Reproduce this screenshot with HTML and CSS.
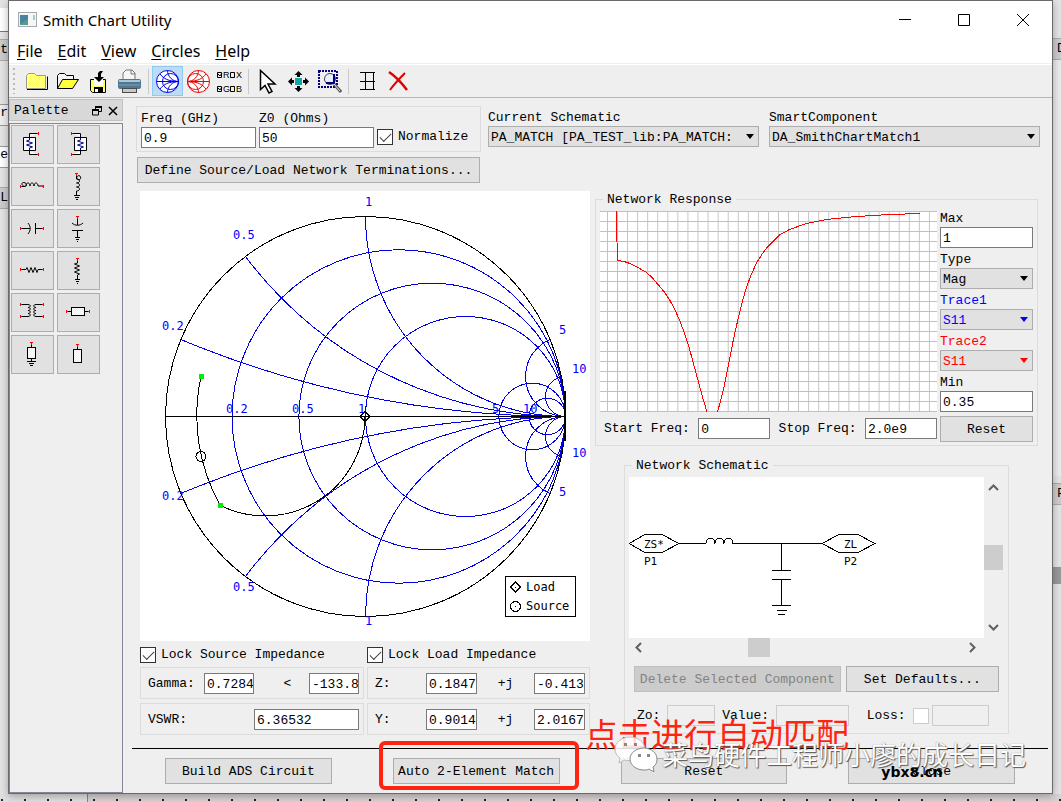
FILE: index.html
```html
<!DOCTYPE html>
<html lang="en">
<head>
<meta charset="utf-8">
<title>Smith Chart Utility</title>
<link rel="stylesheet" href="styles.css">
</head>
<body>
<div class="desktop">
  <div class="edge edge-left" aria-hidden="true">
    <span class="edge-doc"></span><span class="edge-tab">rt</span><span class="edge-gap"></span><span class="edge-field">r</span><span class="edge-field edge-white">ee</span><span class="edge-tab">L</span>
  </div>
  <div class="window">
    <header class="titlebar">
      <svg class="app-icon" width="19" height="15" viewBox="0 0 19 15"><rect x=".5" y=".5" width="18" height="14" fill="#f4f6f8" stroke="#a5aaae"/><rect x="2" y="3" width="8" height="10" fill="#5a9a86"/><path d="M2 3h8v4l-8 5z" fill="#4a82a0"/><path d="M16 3v5" stroke="#5aa08a"/></svg>
      <h1 class="title">Smith Chart Utility</h1>
      <div class="window-buttons">
        <button class="wbtn" aria-label="Minimize"><svg width="14" height="14"><path d="M1 6.500h12" stroke="#000"/></svg></button>
        <button class="wbtn" aria-label="Maximize"><svg width="14" height="14"><path d="M1.500 1.500h11v11h-11z" fill="none" stroke="#000"/></svg></button>
        <button class="wbtn" aria-label="Close window"><svg width="14" height="14"><path d="M1 1l12 12M13 1L1 13" stroke="#000"/></svg></button>
      </div>
    </header>
    <nav class="menubar">
      <button class="menu"><u>F</u>ile</button><button class="menu"><u>E</u>dit</button><button class="menu"><u>V</u>iew</button><button class="menu"><u>C</u>ircles</button><button class="menu"><u>H</u>elp</button>
    </nav>
    <div class="toolbar">
      <span class="grip"></span>
      <button class="tool" aria-label="New"><svg width="25" height="25"><defs><pattern id="dither" width="2" height="2" patternUnits="userSpaceOnUse"><rect width="2" height="2" fill="#ffff66"/><path d="M0 0h1v1h-1zM1 1h1v1h-1z" fill="#fff"/></pattern></defs><path d="M2.500 19.500v-13l2-2h6l2 2h9v13z" fill="url(#dither)" stroke="#999"/><path d="M3 20.500h20.500V7.500" fill="none" stroke="#000"/></svg></button>
      <button class="tool" aria-label="Open"><svg width="25" height="25"><path d="M2.500 19.500v-13l2-2h5l2 2h7v4h4.500l-6 9z" fill="url(#dither)" stroke="#000"/><path d="M2.500 19.500l5-9h16l-6 9z" fill="#ffff3c" stroke="#000"/></svg></button>
      <button class="tool" aria-label="Save"><svg width="25" height="25"><path d="M4.500 10.500h15v13h-13l-2-2z" fill="#ffff66" stroke="#000"/><path d="M8 10h9v7H8z" fill="#fff"/><path d="M8 18h9v6H8z" fill="#000"/><path d="M9 20h3v3H9z" fill="#fff"/><path d="M17 2h-3l-2 2v4H8l5 5 5-5h-3V5z" fill="#000"/></svg></button>
      <button class="tool" aria-label="Print"><svg width="25" height="25"><path d="M6 11V4l3-3h6l3 3v7z" fill="#f6f6f6" stroke="#777"/><path d="M14 1v4h4" fill="none" stroke="#777"/><rect x="1" y="10" width="23" height="10" rx="2" fill="#527791"/><path d="M2 12h21" stroke="#a9c8da" stroke-width="2"/><path d="M2 16h21" stroke="#7ba3bb"/><path d="M5 19h15v5H5z" fill="#4c4c4c"/><path d="M6 20h13v3H6z" fill="#c8c8c8"/></svg></button>
      <span class="separator"></span>
      <button class="tool tool-on" aria-label="Impedance circles"><svg width="25" height="25"><g fill="none" stroke="#0000f0"><circle cx="12.500" cy="12.500" r="11" fill="#fff"/><path d="M1.500 12.500h22M12.500 1.500c0 6 5 11 11 11M12.500 23.500c0-6 5-11 11-11M5 5c4 5 8 7 18 7.500M5 20c4-5 8-7 18-7.500"/><circle cx="15.500" cy="12.500" r="8"/></g></svg></button>
      <button class="tool" aria-label="Admittance circles"><svg width="25" height="25"><g fill="none" stroke="#f00000"><circle cx="12.500" cy="12.500" r="11" fill="#fff"/><path d="M1.500 12.500h22M12.500 1.500c0 6-5 11-11 11M12.500 23.500c0-6-5-11-11-11M20 5c-4 5-8 7-18 7.500M20 20c-4-5-8-7-18-7.500"/><circle cx="9.500" cy="12.500" r="8"/></g></svg></button>
      <button class="tool" aria-label="Circle options"><svg class="tiny" width="27" height="25"><g fill="none" stroke="#000"><path d="M1.500 3.500h4v5h-4zM2 5l2 2 2-3M14.500 3.500h4v5h-4zM1.500 17.500h4v5h-4zM2 19l2 2 2-3M14.500 17.500h4v5h-4z"/></g><text x="7" y="9">R</text><text x="20" y="9">X</text><text x="7" y="23">G</text><text x="20" y="23">B</text></svg></button>
      <span class="separator"></span>
      <button class="tool" aria-label="Select"><svg width="25" height="25"><path d="M5.500 1.500v19l4.500-4 4 7.500 3-1.500-4-7.500h7z" fill="#fff" stroke="#000" stroke-width="1.500"/></svg></button>
      <button class="tool" aria-label="Pan"><svg width="25" height="25"><path d="M9 9h7v7H9z" fill="#14a8a8"/><path d="M12.500 2l4 4h-2.500v2h-3V6H8.500zM12.500 23l4-4h-2.500v-2h-3v2H8.500zM2 12.500l4-4V11h2v3H6v2.500zM23 12.500l-4-4V11h-2v3h2v2.500z" fill="#000"/></svg></button>
      <button class="tool" aria-label="Zoom area"><svg width="25" height="25"><path d="M2 2h18v16H2z" fill="none" stroke="#000080" stroke-width="2" stroke-dasharray="2 1"/><circle cx="13" cy="10" r="5.500" fill="#e8f0ff" stroke="#445"/><path d="M17 5v9H9" fill="none" stroke="#000080" stroke-width="2"/><path d="M17 15l7 8" stroke="#555" stroke-width="3"/><path d="M17 15l6 7" stroke="#eee"/></svg></button>
      <span class="separator"></span>
      <button class="tool" aria-label="Grid"><svg width="25" height="25"><path d="M5 3.500h15M5 12.500h15M5 20.500h15M10.500 3v18M18.500 3v18" stroke="#000"/></svg></button>
      <button class="tool" aria-label="Delete"><svg width="25" height="25"><path d="M3 3c6 4 12 10 18 18" fill="none" stroke="#e00000" stroke-width="2.500"/><path d="M19 4C14 9 9 14 4 21" fill="none" stroke="#e00000" stroke-width="2"/></svg></button>
    </div>

    <div class="workspace">
      <aside class="dock">
        <div class="dock-head"><h2 class="dock-title">Palette</h2>
          <button class="dock-btn" aria-label="Float"><svg width="10" height="10"><path d="M3.500 3V.5h6v5H7M.5 4h6v5h-6z" fill="none" stroke="#000"/><path d="M3 1h7M0 4h7" stroke="#000" stroke-width="2"/></svg></button>
          <button class="dock-btn" aria-label="Close palette"><svg width="10" height="10"><path d="M1 1l8 8M9 1L1 9" stroke="#000" stroke-width="1.500"/></svg></button>
        </div>
        <div class="palette">
          <button class="part" aria-label="Load termination"><svg viewBox="1 1 41 37"><path class="w" d="M12.500 12.500h12v13h-12zM18.500 12V8.500H27M18.500 26v3.500H27"/><path class="b" d="M18.500 13v2l-3 1 6 2-6 2 6 2-3 1v2"/><path class="r" d="M27.500 7v3M27.500 28v3M26 8.500h2M26 29.500h2"/></svg></button>
          <button class="part" aria-label="Source termination"><svg viewBox="1 1 41 37"><path class="w" d="M17.500 12.500h12v13h-12zM23.500 12V8.500H15M23.500 26v3.500H15"/><path class="b" d="M23.500 13v2l-3 1 6 2-6 2 6 2-3 1v2"/><path class="r" d="M14.500 7v3M14.500 28v3M14 8.500h2M14 29.500h2"/></svg></button>
          <button class="part" aria-label="Series inductor"><svg viewBox="1 1 41 37"><path class="k" d="M10 19.500h4c-4-1-4-4-1-4s3 4 1 4M15 19c0-4 4-4 4 0 0-4 4-4 4 0 0-4 4-4 4 0h6"/><path class="r" d="M9.500 18v3M32.500 18v3M9 19.500h2M31 19.500h2"/></svg></button>
          <button class="part" aria-label="Shunt inductor"><svg viewBox="1 1 41 37"><path class="k" d="M19.500 7v4c1 3 5 2 4-1s-4-1-4 2c4 0 4 4 0 4 4 0 4 4 0 4 4 0 4 4 0 4v4M17 28.500h6M18 30.500h4M19 32.500h2"/><path class="r" d="M18 6.500h3M19.500 6v3"/></svg></button>
          <button class="part" aria-label="Series capacitor"><svg viewBox="1 1 41 37"><path class="k" d="M10 19.500h9M17 14c3 4 3 7 0 11M24.500 14v11M24.500 19.500h8"/><path class="r" d="M9.500 18v3M32.500 18v3M9 19.500h2M31 19.500h2"/></svg></button>
          <button class="part" aria-label="Shunt capacitor"><svg viewBox="1 1 41 37"><path class="k" d="M20.500 7v9M15 14c3 3 8 3 11 0M15 21.500h11M20.500 22v6M18 28.500h5M19 30.500h3M20 32.500h1"/><path class="r" d="M19 7.500h3M20.500 7v3"/></svg></button>
          <button class="part" aria-label="Series resistor"><svg viewBox="1 1 41 37"><path class="k" d="M10 18.500h5l1-2 2 5 2-5 2 5 2-5 2 5 1-3h5"/><path class="r" d="M9.500 17v3M32.500 17v3M9 18.500h2M31 18.500h2"/></svg></button>
          <button class="part" aria-label="Shunt resistor"><svg viewBox="1 1 41 37"><path class="k" d="M20.500 7v5l-3 1 5 2-5 2 5 2-5 2 5 2-2 1v4M18 28.500h5M19 30.500h3M20 32.500h1"/><path class="r" d="M19 7.500h3M20.500 7v3"/></svg></button>
          <button class="part" aria-label="Transformer"><svg viewBox="1 1 41 37"><path class="k" d="M10 11.500h7c3 0 3 3 0 3 3 0 3 3 0 3 3 0 3 3 0 3 3 0 3 3 0 3h-7M32 11.500h-7c-3 0-3 3 0 3-3 0-3 3 0 3-3 0-3 3 0 3-3 0-3 3 0 3h7"/><path class="r" d="M9.500 10v3M9.500 22v3M32.500 10v3M32.500 22v3M9 11.500h2M9 23.500h2M31 11.500h2M31 23.500h2"/></svg></button>
          <button class="part" aria-label="Series line"><svg viewBox="1 1 41 37"><path class="k" d="M10 18.500h22"/><rect x="14.500" y="14.500" width="13" height="8" fill="url(#dither)" stroke="#000"/><path class="r" d="M9.500 17v3M32.500 17v3M9 18.500h2M31 18.500h2"/></svg></button>
          <button class="part" aria-label="Shorted stub"><svg viewBox="1 1 41 37"><path class="k" d="M20.500 8v19M16 26.500h9M18 28.500h5M19 30.500h3"/><rect x="16.500" y="12.500" width="8" height="11" fill="url(#dither)" stroke="#000"/><path class="r" d="M19 7.500h3M20.500 7v3"/></svg></button>
          <button class="part" aria-label="Open stub"><svg viewBox="1 1 41 37"><path class="k" d="M20.500 10v6"/><rect x="16.500" y="14.500" width="8" height="13" fill="url(#dither)" stroke="#000"/><path class="r" d="M19 9.500h3M20.500 9v3"/></svg></button>
        </div>
      </aside>

      <main class="main">
        <section class="top">
          <div class="settings">
            <div class="box freq">
              <label class="field">Freq (GHz)<input class="input" value="0.9"></label>
              <label class="field">Z0 (Ohms)<input class="input" value="50"></label>
              <label class="check"><input type="checkbox" checked>Normalize</label>
            </div>
            <button class="btn define">Define Source/Load Network Terminations...</button>
          </div>
          <label class="field pick">Current Schematic<span class="combo"><select class="select"><option>PA_MATCH [PA_TEST_lib:PA_MATCH:</option></select></span></label>
          <label class="field pick">SmartComponent<span class="combo"><select class="select"><option>DA_SmithChartMatch1</option></select></span></label>
        </section>

        <section class="body">
          <div class="left">
            <svg class="smith" viewBox="0 0 450 450" role="img" aria-label="Smith chart">
              <defs><clipPath id="disc"><circle cx="225.500" cy="225.500" r="200"/></clipPath></defs>
              <g class="grid-blue" clip-path="url(#disc)">
                <circle cx="258.800" cy="225.500" r="166.700"/><circle cx="292.200" cy="225.500" r="133.300"/><circle cx="325.500" cy="225.500" r="100"/><circle cx="392.200" cy="225.500" r="33.300"/><circle cx="407.300" cy="225.500" r="18.200"/>
                <circle cx="425.500" cy="-774.500" r="1000"/><circle cx="425.500" cy="1225.500" r="1000"/>
                <circle cx="425.500" cy="-174.500" r="400"/><circle cx="425.500" cy="625.500" r="400"/>
                <circle cx="425.500" cy="25.500" r="200"/><circle cx="425.500" cy="425.500" r="200"/>
                <circle cx="425.500" cy="185.500" r="40"/><circle cx="425.500" cy="265.500" r="40"/>
                <circle cx="425.500" cy="205.500" r="20"/><circle cx="425.500" cy="245.500" r="20"/>
              </g>
              <g class="ink">
                <circle cx="225.500" cy="225.500" r="200"/><path d="M25 225.500h401M370 225.500h50"/><path d="M424.500 200v50" stroke-width="2"/>
                <path d="M61 185.500A184 184 0 0 0 80 314M80.500 314.500A100 100 0 0 0 225 225.500"/>
                <circle cx="61" cy="265.500" r="5"/><path d="M225 220.500l5 5-5 5-5-5z"/>
                <path d="M365.500 385.500h70v40h-70zM375.500 391l5 5-5 5-5-5z"/><circle cx="375.500" cy="415.500" r="5"/>
                <path d="M375 396h1M375 415.500h1"/>
              </g>
              <path fill="#00ee00" d="M59 183h5v5h-5zM78 312h5v5h-5z"/>
              <g class="plot-text blue">
                <text x="225" y="15">1</text><text x="93" y="48">0.5</text><text x="22" y="139">0.2</text><text x="86" y="222">0.2</text><text x="152" y="222">0.5</text><text x="218" y="222">1</text><text x="352" y="222">5</text><text x="383" y="222">10</text><text x="419" y="143">5</text><text x="432" y="182">10</text><text x="432" y="266">10</text><text x="419" y="305">5</text><text x="93" y="400">0.5</text><text x="22" y="309">0.2</text><text x="225" y="434">1</text>
              </g>
              <g class="plot-text"><text x="386" y="400">Load</text><text x="386" y="419">Source</text></g>
            </svg>
            <div class="locks">
              <label class="check"><input type="checkbox" checked>Lock Source Impedance</label>
              <label class="check"><input type="checkbox" checked>Lock Load Impedance</label>
              <div class="box readout"><label for="gamma">Gamma:</label><input id="gamma" class="input" value="0.7284"><span class="op">&lt;</span><input aria-label="Gamma angle" class="input" value="-133.8"></div>
              <div class="box readout complex"><label for="z">Z:</label><input id="z" class="input" value="0.1847"><span class="op">+j</span><input aria-label="Z imaginary" class="input" value="-0.413"></div>
              <div class="box readout"><label for="vswr">VSWR:</label><input id="vswr" class="input wide" value="6.36532"></div>
              <div class="box readout complex"><label for="y">Y:</label><input id="y" class="input" value="0.9014"><span class="op">+j</span><input aria-label="Y imaginary" class="input" value="2.0167"></div>
            </div>
          </div>

          <div class="right">
            <fieldset class="group response">
              <legend>Network Response</legend>
              <div class="plot-side">
                <svg class="plot" viewBox="0 0 337 201" preserveAspectRatio="none" role="img" aria-label="Network response plot">
                  <defs><pattern id="cells" x="7" y="0" width="10.060" height="10" patternUnits="userSpaceOnUse"><path d="M0 .5h10.060M.5 0v10" stroke="#c0c0c0" shape-rendering="crispEdges"/></pattern></defs>
                  <rect width="337" height="201" fill="url(#cells)"/>
                  <path class="curve" d="M16.500 0v12L17.500 49.500 24 50.500 30 52.500 38 56.500 46.500 61.500 52 66.500 58 73.500 64 80.500 70 89.500 75 99 79.500 109 84 121 88.500 134 93 151 98.500 171 102.500 186 107 201M117.500 201l3-11 3-12 3-14 3-15 4-21 5-22 4-16 4-14 5-13 5-11 5-8 5-7 8-8 5-5 10-5.500 17-6 20-4 30-3 33-2 31-1"/>
                </svg>
                <div class="range">
                  <label for="start">Start Freq:</label><input id="start" class="input" value="0">
                  <label for="stop">Stop Freq:</label><input id="stop" class="input" value="2.0e9">
                </div>
              </div>
              <div class="plot-options">
                <label class="field">Max<input class="input" value="1"></label>
                <label class="field">Type<span class="combo"><select class="select"><option>Mag</option></select></span></label>
                <label class="field blue">Trace1<span class="combo"><select class="select"><option>S11</option></select></span></label>
                <label class="field red">Trace2<span class="combo"><select class="select"><option>S11</option></select></span></label>
                <label class="field">Min<input class="input" value="0.35"></label>
                <button class="btn">Reset</button>
              </div>
            </fieldset>

            <fieldset class="group schematic">
              <legend>Network Schematic</legend>
              <div class="viewport">
                <svg class="canvas" viewBox="0 0 355 161" role="img" aria-label="Matching network">
                  <g class="ink"><path d="M0 66.500l16-9h17l17 9-17 9H16zM50 66.500h27c0-7 9-7 9 0 0-7 9-7 9 0 0-7 9-7 9 0h89M193 66.500l17-9h19l17 9-17 9h-19zM152.500 66.500v27M143 93.500h19M143 102.500h19M152.500 102.500v26M143 128.500h19M148 133.500h10M149 137.500h7"/></g>
                  <g class="plot-text small"><text x="15" y="71">ZS*</text><text x="15" y="88">P1</text><text x="215" y="71">ZL</text><text x="215" y="88">P2</text></g>
                </svg>
                <div class="scroll scroll-v"><svg width="11" height="7"><path d="M1 6l4.500-4.500L10 6"/></svg><span class="thumb"></span><svg width="11" height="7"><path d="M1 1l4.500 4.500L10 1"/></svg></div>
                <div class="scroll scroll-h"><svg width="7" height="11"><path d="M6 1L1.500 5.500 6 10"/></svg><span class="thumb"></span><svg width="7" height="11"><path d="M1 1l4.500 4.500L1 10"/></svg></div>
              </div>
              <div class="actions"><button class="btn delete" disabled>Delete Selected Component</button><button class="btn defaults">Set Defaults...</button></div>
              <div class="values">
                <label for="zo">Zo:</label><input id="zo" class="input" disabled>
                <label for="value">Value:</label><input id="value" class="input" disabled>
                <label for="loss">Loss:</label><input id="loss" type="checkbox" disabled><input aria-label="Loss value" class="input loss-value" disabled>
              </div>
            </fieldset>
          </div>
        </section>

        <footer class="footer">
          <button class="btn">Build ADS Circuit</button><span class="marked"><button class="btn">Auto 2-Element Match</button></span><button class="btn">Reset</button><span class="marked-site"><button class="btn">Close</button><b class="site">ybx8.cn</b></span>
          <p class="note" lang="zh">点击进行自动匹配</p>
          <p class="watermark" lang="zh"><svg width="44" height="36" viewBox="0 0 44 36"><path d="M16 1C7 1 1 7 1 13c0 4 2 7 5 9l-1 5 5-3c8 2 20-1 21-10C31 6 24 1 16 1z" fill="#fff" fill-opacity=".85" stroke="#bbb"/><path d="M30 12c-8 0-14 5-14 11s6 11 14 11c2 0 4 0 5-1l5 3-1-5c3-2 4-5 4-8 0-6-6-11-13-11z" fill="#fff" stroke="#888"/><path d="M10 7h3v3h-3zM20 7h3v3h-3zM24 18h3v3h-3zM33 18h3v3h-3z" fill="#888"/></svg>菜鸟硬件工程师小廖的成长日记</p>
        </footer>
      </main>
    </div>
  </div>
  <div class="edge edge-right" aria-hidden="true"><span class="edge-tab">D</span><span class="edge-space"></span><span class="edge-tab">F</span><span class="edge-mark"></span><span class="edge-dark"></span></div>
  <div class="edge-bottom"></div>
</div>
</body>
</html>
```
FILE: styles.css
```css
* { box-sizing: border-box; }
body { margin: 0; background: #e4e4e4; color: #000; font: 13px/16px "Liberation Mono", monospace; }
h1, h2, p { margin: 0; font-weight: normal; }
button, input, select { font: inherit; color: inherit; margin: 0; border-radius: 0; }
button { border: 0; background: none; padding: 0; }
svg { display: block; flex: none; }

.desktop { display: grid; grid-template-columns: 8px minmax(0, 1fr) 8px; grid-template-rows: 1fr 8px; min-height: 100vh; }
.window { display: flex; flex-direction: column; border: 1px solid #6a6a6e; background: #efefef; box-shadow: 0 2px 8px rgba(0,0,0,.3); z-index: 1; }

/* Slivers of the application behind the dialog */
.edge { display: flex; flex-direction: column; overflow: hidden; background: #e4e4e4; white-space: nowrap; }
.edge-left { align-items: flex-end; padding-top: 8px; }
.edge-left > span { width: 8px; direction: rtl; overflow: hidden; }
.edge-doc { height: 24px; background: #fff; border-bottom: 1px solid #777; }
.edge-tab { background: #ccc; border-top: 1px solid #aaa; border-bottom: 1px solid #aaa; flex: none; height: 22px; line-height: 20px; margin-top: 7px; }
.edge-gap { height: 43px; }
.edge-field { height: 22px; background: #eee; border: 1px solid #999; border-width: 1px 0; margin-bottom: 20px; }
.edge-white { background: #fff; margin-bottom: 12px; }
.edge-right { padding-top: 31px; }
.edge-right > span { padding-left: 4px; }
.edge-space { height: 416px; background: #ebebeb; }
.edge-mark { height: 62px; }
.edge-dark { height: 17px; background: #999; }
.edge-bottom { grid-column: 1 / -1; background: radial-gradient(circle at 1px 1px, #222 1px, transparent 1px) 93px 5px / 23px 10px repeat-x, linear-gradient(90deg, #e0e0e0 87px, #88888c 87px, #88888c 88px, #d8d2d2 88px); }

.titlebar { display: flex; align-items: center; height: 37px; padding-left: 9px; background: #fff; font: 15px/20px "Noto Sans", sans-serif; }
.title { margin-left: 6px; font-size: 15px; flex: 1; }
.window-buttons { display: flex; }
.wbtn { width: 59px; height: 36px; display: flex; align-items: center; justify-content: center; }
.menubar { display: flex; gap: 15px; height: 26px; padding-left: 8px; background: #fff; border-bottom: 1px solid #efefef; font: 16px/24px "Noto Sans", sans-serif; }
.menu u { text-underline-offset: 2px; }
.toolbar { display: flex; align-items: center; height: 34px; padding-left: 4px; border-bottom: 1px solid #b5b5b5; border-top: 1px solid #fff; }
.grip { width: 2px; height: 26px; margin-right: 6px; background: repeating-linear-gradient(#b8b8b8 0 2px, transparent 2px 5px); }
.tool { width: 31px; height: 30px; display: flex; align-items: center; justify-content: center; }
.tool-on { background: #bcdcf4; border: 1px solid #90c8f6; }
.separator { width: 1px; height: 25px; margin: 0 3px; background: #c8c8c8; }
.tiny text { font: 9px "Liberation Sans", sans-serif; }

.workspace { display: flex; flex: 1; }
.dock { width: 114px; flex: none; display: flex; flex-direction: column; padding-top: 1px; }
.dock-head { display: flex; align-items: center; height: 22px; padding: 1px 4px 0; background: #d8d8d8; border: 1px solid #c2c2c2; margin-bottom: 2px; }
.dock-title { font-size: 13px; flex: 1; }
.dock-btn { margin-left: 6px; }
.palette { flex: 1; display: grid; grid-template-columns: 43px 43px; grid-auto-rows: 39px; gap: 3px; padding: 1px; border: 1px solid #85859a; align-content: start; }
.part, .btn { background: #e1e1e1; border: 1px solid #adadad; }
.part svg { width: 100%; height: 100%; }
.part path { fill: none; stroke: #000; }
.part .w { fill: #fff; }
.part .b { stroke: #000090; }
.part .r { stroke: #f00; }

.main { flex: 1; min-width: 0; display: flex; flex-direction: column; padding: 8px 12px 0 13px; }
.top { display: flex; }
.settings { width: 345px; margin-right: 7px; display: flex; flex-direction: column; gap: 5px; }
.box { border: 1px solid #dcdcdc; }
.freq { display: flex; align-items: flex-end; height: 46px; padding: 0 3px 3px 4px; gap: 3px; }
.freq .input { width: 115px; }
.freq .check { padding-bottom: 2px; }
.define { margin: 0 1px; }
.field { display: flex; flex-direction: column; }
.pick { flex: 1; min-width: 0; padding-top: 4px; }
.pick + .pick { margin-left: 10px; }
.input { height: 21px; min-width: 0; padding: 2px 0 0 2px; border: 1px solid #7a7a7a; background: #fff; }
.input:disabled { background: #efefef; border-color: #ccc; }
.btn { height: 26px; padding: 2px 0 0; white-space: nowrap; }
.btn:disabled { background: #ccc; border-color: #bfbfbf; color: #838383; }
.combo { display: block; position: relative; }
.combo::after { content: ""; position: absolute; right: 5px; top: 8px; border: 4px solid transparent; border-top: 5px solid; border-bottom: 0; pointer-events: none; }
.select { appearance: none; width: 100%; height: 21px; padding: 2px 18px 0 2px; background: #e1e1e1; border: 1px solid #adadad; display: block; }
.check { display: flex; align-items: center; gap: 5px; line-height: 18px; }
.locks .check { height: 17px; }
input[type="checkbox"] { appearance: none; flex: none; width: 16px; height: 16px; border: 1px solid #333; background: #fff; display: grid; place-items: center; }
input[type="checkbox"]:checked::before { content: ""; width: 10px; height: 5px; border: solid #444; border-width: 0 0 1px 1px; transform: translateY(-1px) rotate(-45deg); }
input[type="checkbox"]:disabled { border-color: #ccc; }
.blue { color: #00f; }
.red { color: #f00; }

.body { display: grid; grid-template-columns: 450fr 443fr; gap: 5px; padding: 8px 2px 0 4px; }
.left, .right { min-width: 0; }
.smith { width: 100%; background: #fff; }
.ink, .grid-blue { fill: none; stroke: #000; shape-rendering: crispEdges; }
.grid-blue { stroke: #0000e6; }
.plot-text { font: 12px "DejaVu Sans Mono", monospace; }
.plot-text.blue { fill: #00f; }
.plot-text.small { font-size: 11px; }
.locks { display: grid; grid-template-columns: 224fr 223fr; gap: 4px 3px; padding-top: 5px; }
.readout { display: flex; align-items: center; height: 32px; padding: 1px 4px 0 7px; }
.readout label { flex: 1; }
.readout .input { width: 50px; }
.readout .wide { width: 105px; }
.readout .op { width: 55px; padding-left: 12px; text-align: center; }
.readout.complex .input { width: 51px; }
.readout.complex .op { width: 57px; padding-left: 0; }

.group { margin: 0; min-width: 0; border: 1px solid #dcdcdc; padding: 4px 4px 3px; }
.group legend { height: 16px; line-height: 18px; padding: 0 4px; margin-left: 3px; }
.response { display: grid; grid-template-columns: minmax(0, 1fr) 93px; gap: 3px; }
.plot { width: 100%; height: 201px; background: #fff; }
.curve { fill: none; stroke: #f00; shape-rendering: crispEdges; }
.range { display: flex; align-items: center; justify-content: space-between; padding: 6px 0 0 4px; }
.range .input { width: 72px; }
.plot-options { display: flex; flex-direction: column; gap: 4px; }
.schematic { margin: 11px 29px 0 29px; padding: 4px 5px 7px 4px; }
.viewport { display: grid; grid-template-columns: minmax(0, 1fr) 19px; }
.canvas { width: 100%; background: #fff; }
.scroll { display: flex; align-items: center; justify-content: space-between; }
.scroll path { fill: none; stroke: #606060; stroke-width: 2; }
.scroll-v { flex-direction: column; padding: 7px 0; }
.scroll-v .thumb { width: 19px; height: 25px; }
.scroll-h { height: 19px; padding: 0 8px 0 6px; }
.scroll-h .thumb { width: 22px; height: 19px; margin-right: 94px; }
.thumb { background: #cdcdcd; }
.actions { display: flex; gap: 5px; padding: 9px 4px 0 5px; }
.delete { flex: 207; }
.defaults { flex: 153; }
.values { display: flex; align-items: center; padding: 13px 14px 0 8px; }
.values label { margin-right: 7px; }
.values .input { flex: 46; }
.values #zo { margin-right: 7px; }
.values #value { flex: 72; margin-right: 18px; }
.values #loss { margin-right: 3px; }
.values .loss-value { flex: 56; }

.footer { position: relative; display: grid; grid-template-columns: repeat(4, 1fr); gap: 61px; margin: 13px -8px 0 -4px; padding: 9px 33px; border-top: 1px solid #000; }
.footer .btn { width: 100%; }
.marked, .marked-site { position: relative; }
.marked::after { content: ""; position: absolute; inset: -17px -19px -6px -14px; border: 4px solid #ff2412; border-radius: 6px; pointer-events: none; }
.site { position: absolute; left: 33px; top: 6px; font: bold 14px/16px "DejaVu Sans", sans-serif; }
.note { position: absolute; right: 199px; top: -36px; color: #ff2412; font: 33px/40px "Noto Sans CJK SC", sans-serif; white-space: nowrap; }
.watermark { position: absolute; right: 22px; top: -13px; display: flex; align-items: center; gap: 4px; color: #fff; font: 26px/36px "Noto Sans CJK SC", sans-serif; text-shadow: 1px 1px 1px #555, 0 0 1px #777; white-space: nowrap; }
```
